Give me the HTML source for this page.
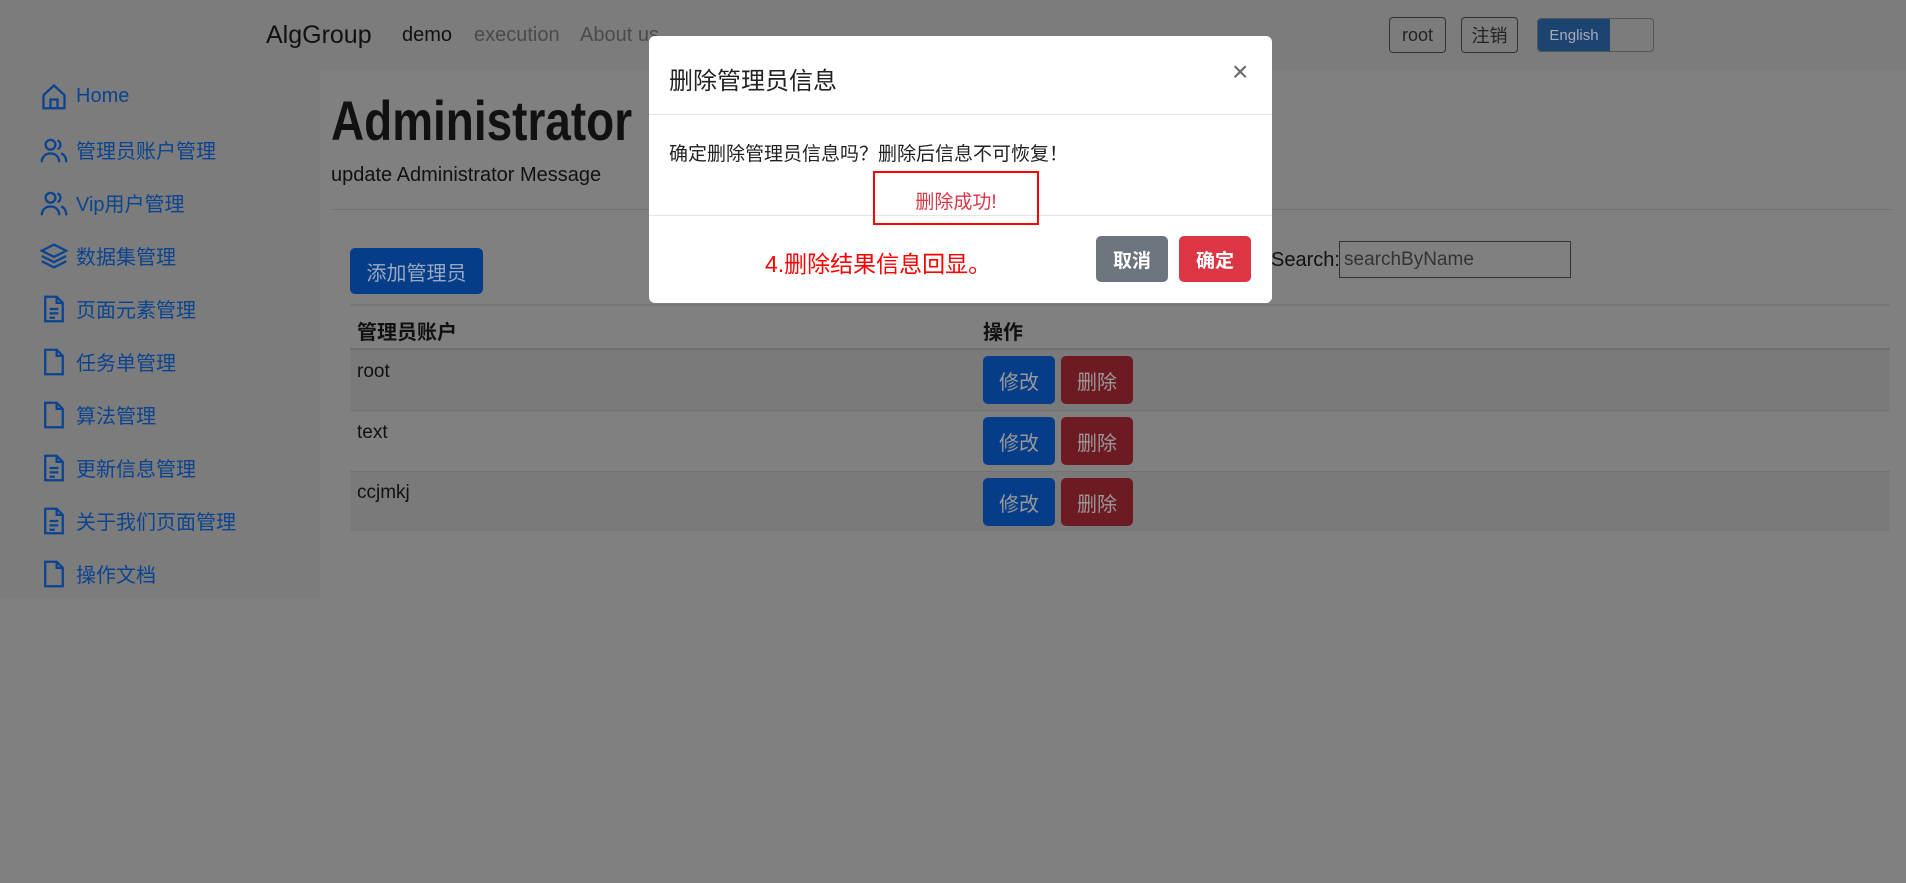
<!DOCTYPE html>
<html><head><meta charset="utf-8"><style>
*{box-sizing:border-box;margin:0;padding:0}
body{width:1906px;height:883px;background:#808080;font-family:"Liberation Sans","Noto Sans CJK SC",sans-serif;position:relative;overflow:hidden;color:#111}
.a{position:absolute;white-space:nowrap}
.side{position:absolute;left:0;top:70px;width:320px;height:528px;background:#7c7c7d}
.nav{position:absolute;left:0;top:0;width:1906px;height:70px;background:#7c7c7d}
.si{position:absolute;left:40px;font-size:20px;color:#0a438f;display:flex;align-items:center;gap:8px}
.si svg{width:28px;height:28px}
.btn{position:absolute;border-radius:5px;display:flex;align-items:center;justify-content:center;font-size:20px}
.ob{position:absolute;border:1px solid #333;border-radius:4px;font-size:18px;color:#222;display:flex;align-items:center;justify-content:center}
</style></head><body>
<div class="nav"></div>
<div class="a" style="left:266px;top:21px;font-size:25px;color:#111">AlgGroup</div>
<div class="a" style="left:402px;top:24px;font-size:20px;color:#111">demo</div>
<div class="a" style="left:474px;top:24px;font-size:20px;color:#4a4a4a">execution</div>
<div class="a" style="left:580px;top:24px;font-size:20px;color:#4a4a4a">About us</div>
<div class="ob" style="left:1389px;top:17px;width:57px;height:36px">root</div>
<div class="ob" style="left:1461px;top:17px;width:57px;height:36px">注销</div>
<div class="a" style="left:1537px;top:18px;width:117px;height:34px;border:1px solid #555;border-radius:4px;overflow:hidden"><div style="width:72px;height:100%;background:#1b4470;color:#aab;font-size:15px;display:flex;align-items:center;justify-content:center">English</div></div>

<div class="side"></div>
<div class="si" style="top:82px"><svg viewBox="0 0 16 16" fill="none" stroke="#0a438f" stroke-width="1.3"><path d="M2 7.5L8 2l6 5.5V15H2z M6 15V10h4v5"/></svg>Home</div>
<div class="si" style="top:135px"><svg viewBox="0 0 16 16" fill="none" stroke="#0a438f" stroke-width="1.3"><circle cx="6" cy="5" r="2.8"/><path d="M1 15c0-3 2-5 5-5s5 2 5 5"/><path d="M10 2.5a2.7 2.7 0 010 5M12 10c2 .5 3 2.5 3 5"/></svg>管理员账户管理</div>
<div class="si" style="top:188px"><svg viewBox="0 0 16 16" fill="none" stroke="#0a438f" stroke-width="1.3"><circle cx="6" cy="5" r="2.8"/><path d="M1 15c0-3 2-5 5-5s5 2 5 5"/><path d="M10 2.5a2.7 2.7 0 010 5M12 10c2 .5 3 2.5 3 5"/></svg>Vip用户管理</div>
<div class="si" style="top:241px"><svg viewBox="0 0 16 16" fill="none" stroke="#0a438f" stroke-width="1.3"><path d="M8 1.5L15 5 8 8.5 1 5z M1 8l7 3.5L15 8 M1 11l7 3.5 7-3.5"/></svg>数据集管理</div>
<div class="si" style="top:294px"><svg viewBox="0 0 16 16" fill="none" stroke="#0a438f" stroke-width="1.3"><path d="M3 1h6.5L13 4.5V15H3z M9.5 1v3.5H13 M5.5 8h5M5.5 10.5h5M5.5 13h3"/></svg>页面元素管理</div>
<div class="si" style="top:347px"><svg viewBox="0 0 16 16" fill="none" stroke="#0a438f" stroke-width="1.3"><path d="M3 1h6.5L13 4.5V15H3z M9.5 1v3.5H13"/></svg>任务单管理</div>
<div class="si" style="top:400px"><svg viewBox="0 0 16 16" fill="none" stroke="#0a438f" stroke-width="1.3"><path d="M3 1h6.5L13 4.5V15H3z M9.5 1v3.5H13"/></svg>算法管理</div>
<div class="si" style="top:453px"><svg viewBox="0 0 16 16" fill="none" stroke="#0a438f" stroke-width="1.3"><path d="M3 1h6.5L13 4.5V15H3z M9.5 1v3.5H13 M5.5 8h5M5.5 10.5h5M5.5 13h3"/></svg>更新信息管理</div>
<div class="si" style="top:506px"><svg viewBox="0 0 16 16" fill="none" stroke="#0a438f" stroke-width="1.3"><path d="M3 1h6.5L13 4.5V15H3z M9.5 1v3.5H13 M5.5 8h5M5.5 10.5h5M5.5 13h3"/></svg>关于我们页面管理</div>
<div class="si" style="top:559px"><svg viewBox="0 0 16 16" fill="none" stroke="#0a438f" stroke-width="1.3"><path d="M3 1h6.5L13 4.5V15H3z M9.5 1v3.5H13"/></svg>操作文档</div>

<div class="a" style="left:331px;top:88px;font-size:56px;font-weight:bold;color:#111;transform:scaleX(0.82);transform-origin:0 0">Administrator</div>
<div class="a" style="left:331px;top:164px;font-size:20px;color:#111">update Administrator Message</div>
<div class="a" style="left:331px;top:209px;width:1560px;height:1px;background:#707070"></div>
<div class="btn" style="left:350px;top:248px;width:133px;height:46px;background:#063d88;color:#9aa8c0">添加管理员</div>
<div class="a" style="left:1271px;top:249px;font-size:20px">Search:</div>
<div class="a" style="left:1339px;top:241px;width:232px;height:37px;border:1px solid #333;font-size:19px;color:#333;padding:7px 4px">searchByName</div>

<div class="a" style="left:350px;top:304px;width:1540px;height:2px;background:#777"></div>
<div class="a" style="left:357px;top:316px;font-size:20px;font-weight:bold">管理员账户</div>
<div class="a" style="left:983px;top:316px;font-size:20px;font-weight:bold">操作</div>
<div class="a" style="left:350px;top:348px;width:1540px;height:2px;background:#6e6e6e"></div>
<div class="a" style="left:350px;top:350px;width:1540px;height:60px;background:#7a7a7a"></div>
<div class="a" style="left:350px;top:410px;width:1540px;height:1px;background:#727272"></div>
<div class="a" style="left:350px;top:471px;width:1540px;height:1px;background:#727272"></div>
<div class="a" style="left:350px;top:472px;width:1540px;height:59px;background:#7a7a7a"></div>
<div class="a" style="left:357px;top:361px;font-size:19px">root</div>
<div class="a" style="left:357px;top:422px;font-size:19px">text</div>
<div class="a" style="left:357px;top:482px;font-size:19px">ccjmkj</div>
<div class="btn" style="left:983px;top:356px;width:72px;height:48px;background:#063d88;color:#999">修改</div>
<div class="btn" style="left:1061px;top:356px;width:72px;height:48px;background:#6e1a22;color:#999">删除</div>
<div class="btn" style="left:983px;top:417px;width:72px;height:48px;background:#063d88;color:#999">修改</div>
<div class="btn" style="left:1061px;top:417px;width:72px;height:48px;background:#6e1a22;color:#999">删除</div>
<div class="btn" style="left:983px;top:478px;width:72px;height:48px;background:#063d88;color:#999">修改</div>
<div class="btn" style="left:1061px;top:478px;width:72px;height:48px;background:#6e1a22;color:#999">删除</div>

<div class="a" style="left:649px;top:36px;width:623px;height:267px;background:#fff;border-radius:6px"></div>
<div class="a" style="left:669px;top:61px;font-size:24px;color:#222">删除管理员信息</div>
<div class="a" style="left:1232px;top:56px;font-size:28px;color:#666">×</div>
<div class="a" style="left:649px;top:114px;width:623px;height:1px;background:#e5e5e5"></div>
<div class="a" style="left:669px;top:139px;font-size:19px;color:#222">确定删除管理员信息吗？删除后信息不可恢复！</div>
<div class="a" style="left:649px;top:215px;width:623px;height:1px;background:#e5e5e5"></div>
<div class="a" style="left:873px;top:171px;width:166px;height:54px;border:2px solid #f00"></div>
<div class="a" style="left:873px;top:187px;width:166px;text-align:center;font-size:19px;color:#dc3545">删除成功!</div>
<div class="a" style="left:765px;top:245px;font-size:23px;color:#f00">4.删除结果信息回显。</div>
<div class="btn" style="left:1096px;top:236px;width:72px;height:46px;background:#6c757d;color:#fff;font-weight:bold;font-size:19px">取消</div>
<div class="btn" style="left:1179px;top:236px;width:72px;height:46px;background:#dc3545;color:#fff;font-weight:bold;font-size:19px">确定</div>
</body></html>
